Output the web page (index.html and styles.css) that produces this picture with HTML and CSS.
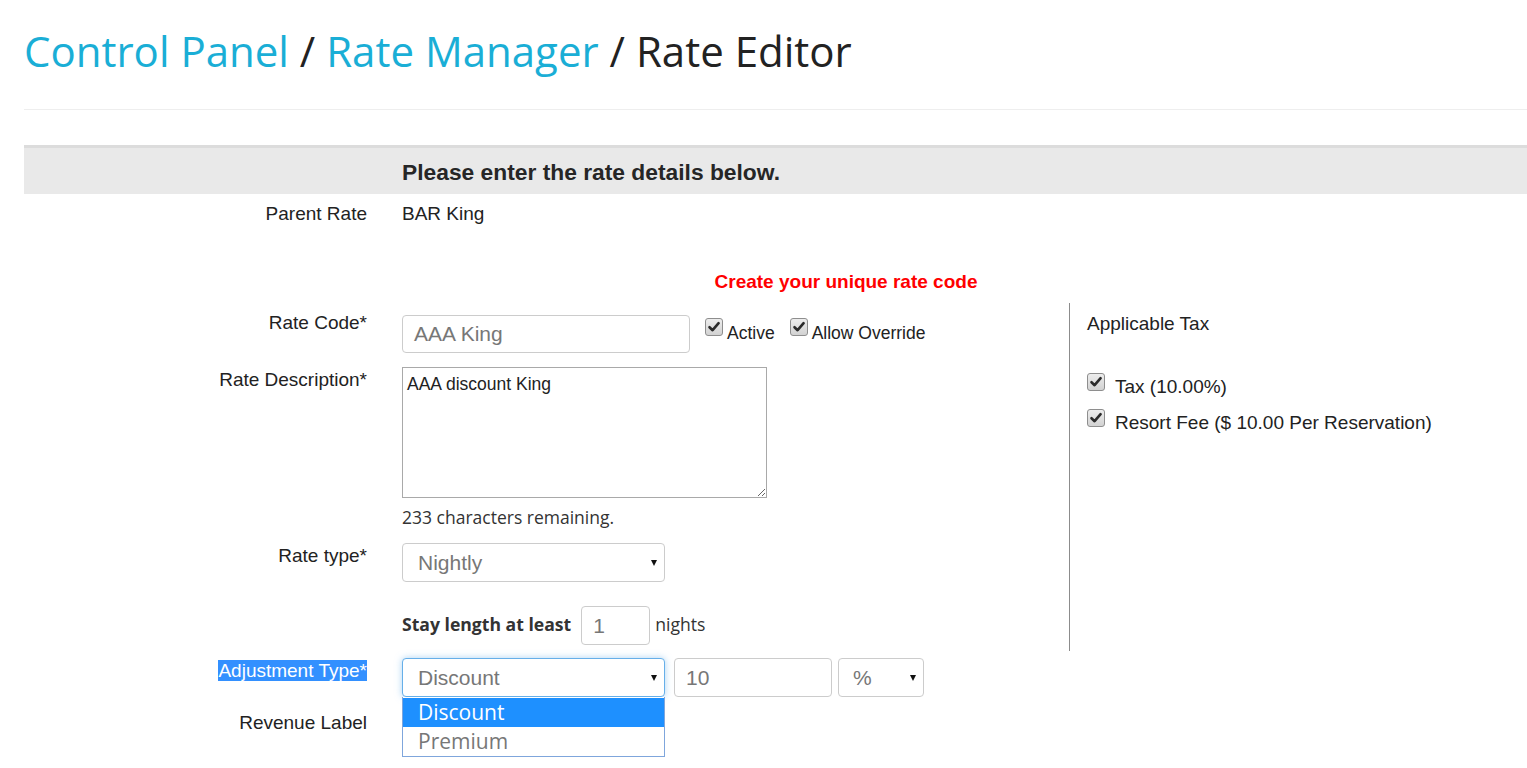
FILE: index.html
```html
<!DOCTYPE html>
<html>
<head>
<meta charset="utf-8">
<title>Rate Editor</title>
<link rel="stylesheet" href="styles.css">
</head>
<body>
<div class="page">
  <h1 class="title"><span class="crumb">Control Panel</span> / <span class="crumb">Rate Manager</span> / Rate Editor</h1>
  <hr class="rule">
  <div class="bar"><span class="bar-text">Please enter the rate details below.</span></div>

  <div class="row row-parent">
    <div class="lbl">Parent Rate</div>
    <div class="val">BAR King</div>
  </div>

  <div class="notice">Create your unique rate code</div>

  <div class="section">
    <div class="left">
      <div class="row">
        <div class="lbl lbl-tight">Rate Code*</div>
        <div class="val val-flex">
          <div class="input input-code">AAA King</div>
          <div class="chk">
            <span class="box"><svg width="16" height="16" viewBox="0 0 16 16"><path d="M3.5 8.2 L6.6 11.2 L12.6 4.2" fill="none" stroke="#2b2b2b" stroke-width="2.6" stroke-linecap="round" stroke-linejoin="round"/></svg></span>
            <span class="chk-text">Active</span>
          </div>
          <div class="chk">
            <span class="box"><svg width="16" height="16" viewBox="0 0 16 16"><path d="M3.5 8.2 L6.6 11.2 L12.6 4.2" fill="none" stroke="#2b2b2b" stroke-width="2.6" stroke-linecap="round" stroke-linejoin="round"/></svg></span>
            <span class="chk-text">Allow Override</span>
          </div>
        </div>
      </div>

      <div class="row row-desc">
        <div class="lbl">Rate Description*</div>
        <div class="val">
          <textarea class="area" readonly>AAA discount King</textarea>
          <div class="hint">233 characters remaining.</div>
        </div>
      </div>

      <div class="row row-type">
        <div class="lbl">Rate type*</div>
        <div class="val">
          <div class="select select-type"><span>Nightly</span><span class="caret"></span></div>
        </div>
      </div>

      <div class="row row-stay">
        <div class="lbl"></div>
        <div class="val val-flex val-center">
          <span class="stay-label">Stay length at least</span>
          <div class="input input-small">1</div>
          <span class="nights">nights</span>
        </div>
      </div>
    </div>

    <div class="right">
      <div class="tax-title">Applicable Tax</div>
      <div class="tax-list">
        <div class="tax-row">
          <span class="box"><svg width="16" height="16" viewBox="0 0 16 16"><path d="M3.5 8.2 L6.6 11.2 L12.6 4.2" fill="none" stroke="#2b2b2b" stroke-width="2.6" stroke-linecap="round" stroke-linejoin="round"/></svg></span>
          <span class="tax-text">Tax (10.00%)</span>
        </div>
        <div class="tax-row">
          <span class="box"><svg width="16" height="16" viewBox="0 0 16 16"><path d="M3.5 8.2 L6.6 11.2 L12.6 4.2" fill="none" stroke="#2b2b2b" stroke-width="2.6" stroke-linecap="round" stroke-linejoin="round"/></svg></span>
          <span class="tax-text">Resort Fee ($ 10.00 Per Reservation)</span>
        </div>
      </div>
    </div>
  </div>

  <div class="row row-adj">
    <div class="lbl"><span class="hl">Adjustment Type*</span></div>
    <div class="val val-flex val-rel">
      <div class="select select-adj focus"><span>Discount</span><span class="caret"></span></div>
      <div class="input input-amount">10</div>
      <div class="select select-pct"><span>%</span><span class="caret"></span></div>
      <div class="dropdown">
        <div class="opt opt-on">Discount</div>
        <div class="opt">Premium</div>
      </div>
    </div>
  </div>

  <div class="row row-rev">
    <div class="lbl">Revenue Label</div>
    <div class="val"></div>
  </div>
</div>
</body>
</html>
```

FILE: styles.css
```css
html, body {
  margin: 0;
  padding: 0;
  background: #fff;
}
body {
  font-family: "Liberation Sans", Arial, sans-serif;
  color: #333;
}
.page {
  padding-left: 24px;
  min-height: 768px;
  box-sizing: border-box;
}
.title {
  margin: 26px 0 0 0;
  font-family: "Open Sans", sans-serif;
  font-weight: 400;
  font-size: 42px;
  line-height: 50px;
  color: #222;
  white-space: nowrap;
}
.crumb {
  color: #1aaed6;
}
.rule {
  margin: 33px 0 0 0;
  border: 0;
  border-top: 1px solid #eee;
  height: 0;
}
.bar {
  margin-top: 35px;
  border-top: 3px solid #dcdcdc;
  background: #e9e9e9;
  height: 46px;
  display: flex;
  align-items: center;
  padding-left: 378px;
}
.bar-text {
  font-weight: 700;
  font-size: 22.8px;
  color: #262626;
  margin-top: 2px;
}
.row {
  display: flex;
  align-items: flex-start;
}
.lbl {
  width: 343px;
  flex-shrink: 0;
  text-align: right;
  font-size: 19px;
  line-height: 22px;
  padding-top: 2px;
  color: #222;
}
.lbl-tight {
  padding-top: 0;
  margin-top: -3px;
}
.val {
  margin-left: 35px;
  font-size: 19px;
  line-height: 22px;
  color: #222;
}
.val-flex {
  display: flex;
  align-items: flex-start;
}
.val-center {
  align-items: center;
}
.val-rel {
  position: relative;
}
.row-parent {
  margin-top: 9px;
}
.row-parent .lbl {
  padding-top: 0;
}
.notice {
  margin-top: 46px;
  width: 888px;
  margin-left: 378px;
  text-align: center;
  font-weight: 700;
  font-size: 19px;
  line-height: 22px;
  color: #ff0000;
}
.section {
  margin-top: 10px;
  display: flex;
  align-items: stretch;
}
.left {
  width: 1045px;
  flex-shrink: 0;
  padding-top: 12px;
  padding-bottom: 6px;
}
.right {
  flex: 1;
  border-left: 1px solid #8c8c8c;
  padding-left: 17px;
  padding-top: 10px;
}
.input {
  box-sizing: border-box;
  height: 39px;
  border: 1px solid #ccc;
  border-radius: 4px;
  padding: 0 11px;
  font-family: "Liberation Sans", Arial, sans-serif;
  font-size: 21px;
  line-height: 37px;
  color: #777;
  background: #fff;
}
.input-code {
  width: 288px;
  height: 38px;
  line-height: 36px;
}
.chk {
  display: flex;
  align-items: flex-start;
  margin-left: 15px;
  padding-top: 3px;
}
.box {
  box-sizing: border-box;
  width: 18px;
  height: 18px;
  border: 1px solid #8e8e8e;
  border-radius: 3px;
  background: linear-gradient(#ededed, #d2d2d2);
  display: flex;
  align-items: center;
  justify-content: center;
  flex-shrink: 0;
}
.chk-text {
  margin-left: 4px;
  margin-top: 5px;
  font-size: 17.5px;
  line-height: 20px;
  color: #222;
}
.row-desc {
  margin-top: 14px;
}
.area {
  display: block;
  box-sizing: border-box;
  width: 365px;
  height: 131px;
  margin: 0;
  border: 1px solid #a9a9a9;
  border-radius: 0;
  padding: 6px 4px;
  font-family: "Liberation Sans", Arial, sans-serif;
  font-size: 17.5px;
  line-height: 20px;
  color: #222;
  background: #fff;
  outline: none;
}
.hint {
  margin-top: 9px;
  font-family: "Open Sans", sans-serif;
  font-size: 17.5px;
  line-height: 20px;
  color: #333;
}
.row-type {
  margin-top: 16px;
}
.select {
  box-sizing: border-box;
  height: 39px;
  border: 1px solid #ccc;
  border-radius: 4px;
  display: flex;
  align-items: center;
  justify-content: space-between;
  padding: 0 7px 0 15px;
  font-family: "Liberation Sans", Arial, sans-serif;
  font-size: 21px;
  color: #777;
  background: #fff;
}
.caret {
  width: 0;
  height: 0;
  border-left: 3.5px solid transparent;
  border-right: 3.5px solid transparent;
  border-top: 6px solid #111;
}
.select-type {
  width: 263px;
}
.row-stay {
  margin-top: 24px;
}
.stay-label {
  font-family: "Open Sans", sans-serif;
  font-weight: 700;
  font-size: 17.6px;
  color: #333;
  margin-top: -3px;
}
.input-small {
  width: 69px;
  margin-left: 10px;
}
.nights {
  margin-left: 5px;
  font-family: "Open Sans", sans-serif;
  font-size: 17.6px;
  color: #333;
  margin-top: -3px;
}
.tax-title {
  font-size: 19px;
  line-height: 22px;
  color: #222;
}
.tax-list {
  margin-top: 38px;
}
.tax-row {
  display: flex;
  align-items: flex-start;
  height: 36px;
}
.tax-text {
  margin-left: 10px;
  margin-top: 3px;
  font-size: 19px;
  line-height: 22px;
  color: #222;
}
.row-adj {
  margin-top: 7px;
}
.hl {
  background: #3390ff;
  color: #fff;
}
.select-adj {
  width: 263px;
}
.focus {
  border-color: #66afe9;
  box-shadow: 0 0 7px rgba(102, 175, 233, 0.55);
}
.input-amount {
  width: 158px;
  margin-left: 9px;
}
.select-pct {
  width: 86px;
  margin-left: 6px;
  padding-left: 14px;
}
.dropdown {
  position: absolute;
  left: 0;
  top: 39px;
  width: 263px;
  box-sizing: border-box;
  border: 1px solid #7fa6dc;
  border-top: 0;
  background: #fff;
  padding-top: 1px;
}
.opt {
  height: 29px;
  line-height: 29px;
  padding-left: 15px;
  font-family: "Open Sans", sans-serif;
  font-size: 21px;
  color: #777;
}
.opt-on {
  background: #1e90ff;
  color: #fff;
}
.row-rev {
  margin-top: 13px;
}
```
